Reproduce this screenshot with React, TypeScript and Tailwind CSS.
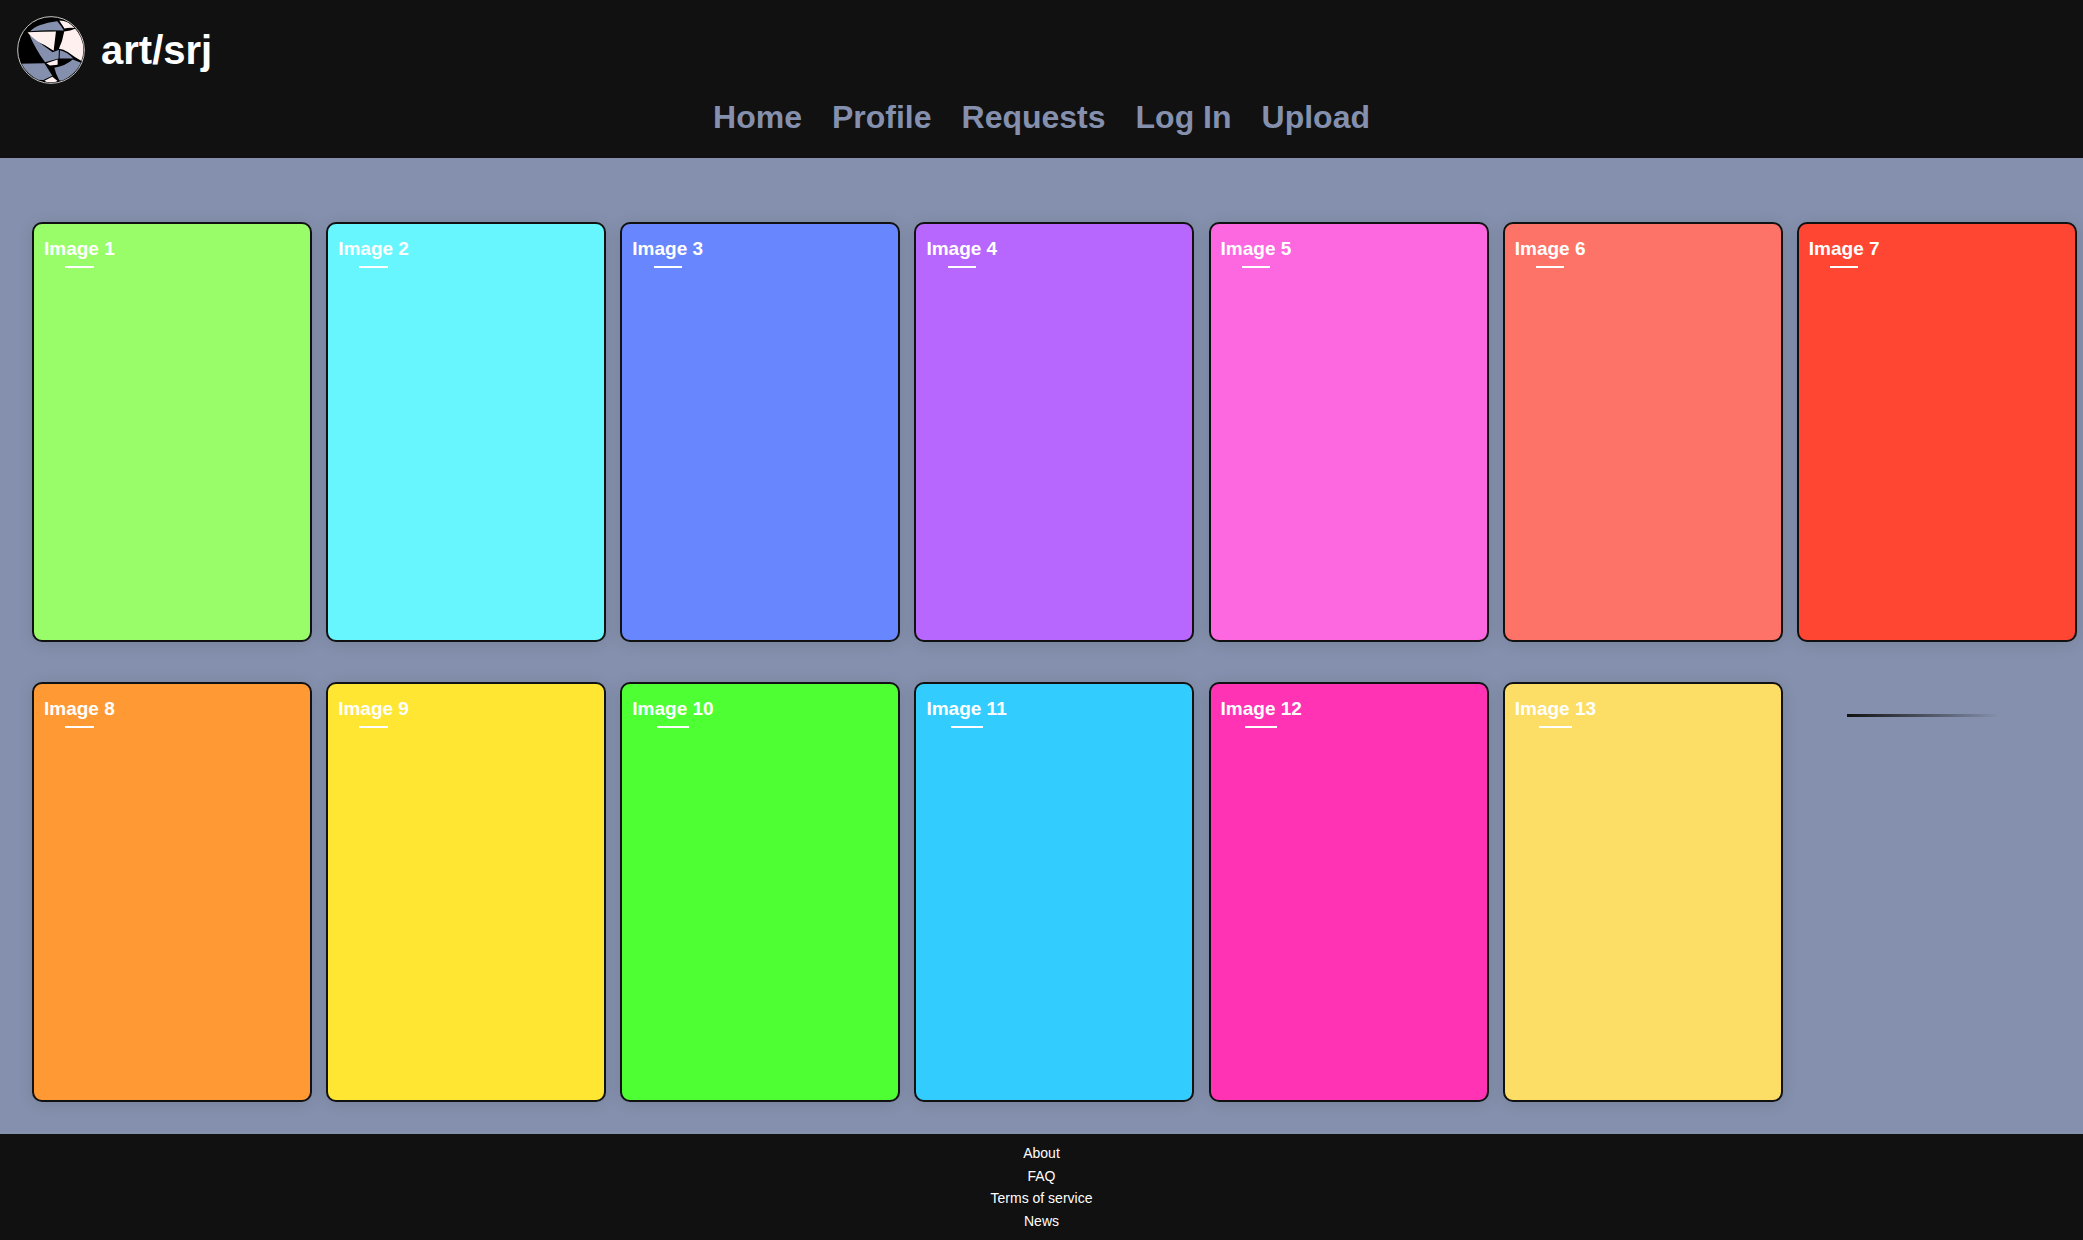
const cards = [
  { title: "Image 1", color: "bg-[#98fd68]" },
  { title: "Image 2", color: "bg-[#67f6fe]" },
  { title: "Image 3", color: "bg-[#6886fe]" },
  { title: "Image 4", color: "bg-[#b767fe]" },
  { title: "Image 5", color: "bg-[#fd67e0]" },
  { title: "Image 6", color: "bg-[#fe7368]" },
  { title: "Image 7", color: "bg-[#ff4633]" },
  { title: "Image 8", color: "bg-[#ff9933]" },
  { title: "Image 9", color: "bg-[#ffe633]" },
  { title: "Image 10", color: "bg-[#4dff33]" },
  { title: "Image 11", color: "bg-[#33ccff]" },
  { title: "Image 12", color: "bg-[#ff33b3]" },
  { title: "Image 13", color: "bg-[#fcdd66]" },
];

const navLinks = ["Home", "Profile", "Requests", "Log In", "Upload"];
const footerLinks = ["About", "FAQ", "Terms of service", "News"];

const Logo = () => {
  return (
    <svg width="68" height="68" viewBox="50 48 206 206" className="shrink-0">
      <defs>
        <clipPath id="disc">
          <circle cx="153" cy="151" r="98" />
        </clipPath>
      </defs>
      <circle cx="153" cy="151" r="101" fill="#000" stroke="#c8c8c8" strokeWidth="3" />
      <g clipPath="url(#disc)">
        {/* top blue */}
        <path d="M90 94 Q110 72 172 64 Q184 78 192 92 Q140 89 90 94Z" fill="#8490ad" />
        <path d="M178 62 Q205 62 226 84 Q205 82 194 86 Q186 74 178 62Z" fill="#fff0f0" />
        {/* cream left and right */}
        <path d="M82 97 Q125 95 168 95 L161 153 Q135 134 110 125 Q92 112 82 97Z" fill="#fff0f0" />
        <path d="M193 95 Q212 93 228 86 L262 130 L252 188 Q225 174 205 158 Q190 148 177 147 Q188 125 193 95Z" fill="#fff0f0" />
        {/* blue center */}
        <path d="M88 106 Q120 130 158 158 L177 150 L176 177 L135 188 Q106 148 88 106Z" fill="#8490ad" />
        <path d="M180 152 Q204 158 220 177 L179 177Z" fill="#8490ad" />
        <path d="M139 191 L173 180 L173 196 L150 198Z" fill="#fff0f0" />
        {/* blue bottom */}
        <path d="M219 180 Q234 186 250 192 L200 250 L178 243 Q167 222 163 205 Q196 200 219 180Z" fill="#8490ad" />
        <path d="M54 193 Q95 191 133 191 L157 229 Q142 236 130 242 L80 240Z" fill="#8490ad" />
        <path d="M133 244 L157 232 L173 245 L150 255Z" fill="#fff0f0" />
      </g>
    </svg>
  );
};

const ImageCard = ({ title, color }: { title: string; color: string }) => {
  return (
    <div
      className={`h-[420px] rounded-[10px] border-2 border-[#111111] px-[10px] pt-[11px] shadow-[0_2px_16px_rgba(0,0,0,0.1)] ${color}`}
    >
      <h3 className="inline-block text-[19px] font-bold text-white">
        {title}
        <div className="mx-auto mt-[2px] h-[2px] w-[40%] bg-white"></div>
      </h3>
    </div>
  );
};

export default function App() {
  return (
    <div className="flex min-h-[1240px] flex-col bg-[#8490ad] font-['Liberation_Sans',Arial,sans-serif]">
      <header className="h-[158px] bg-[#111111]">
        <div className="flex items-center gap-4 pl-[17px] pt-4">
          <Logo />
          <h1 className="text-[40px] font-bold text-white">art/srj</h1>
        </div>
        <nav className="mt-[9px] flex justify-center gap-[30px] text-[32px] font-bold text-[#8490ad]">
          {navLinks.map((link) => (
            <a key={link}>{link}</a>
          ))}
        </nav>
      </header>

      <main className="grid flex-1 grid-cols-[repeat(7,280px)] gap-x-[14.15px] gap-y-10 pb-8 pl-8 pt-16">
        {cards.map((card) => (
          <ImageCard key={card.title} {...card} />
        ))}
        <div className="pl-[50px] pt-[32px]">
          <div className="h-[3px] w-[152px] bg-gradient-to-r from-[#111111] to-transparent"></div>
        </div>
      </main>

      <footer className="flex h-[106px] flex-col items-center bg-[#111111] py-2 text-sm leading-[22.6px] text-white">
        {footerLinks.map((link) => (
          <a key={link}>{link}</a>
        ))}
      </footer>
    </div>
  );
}
